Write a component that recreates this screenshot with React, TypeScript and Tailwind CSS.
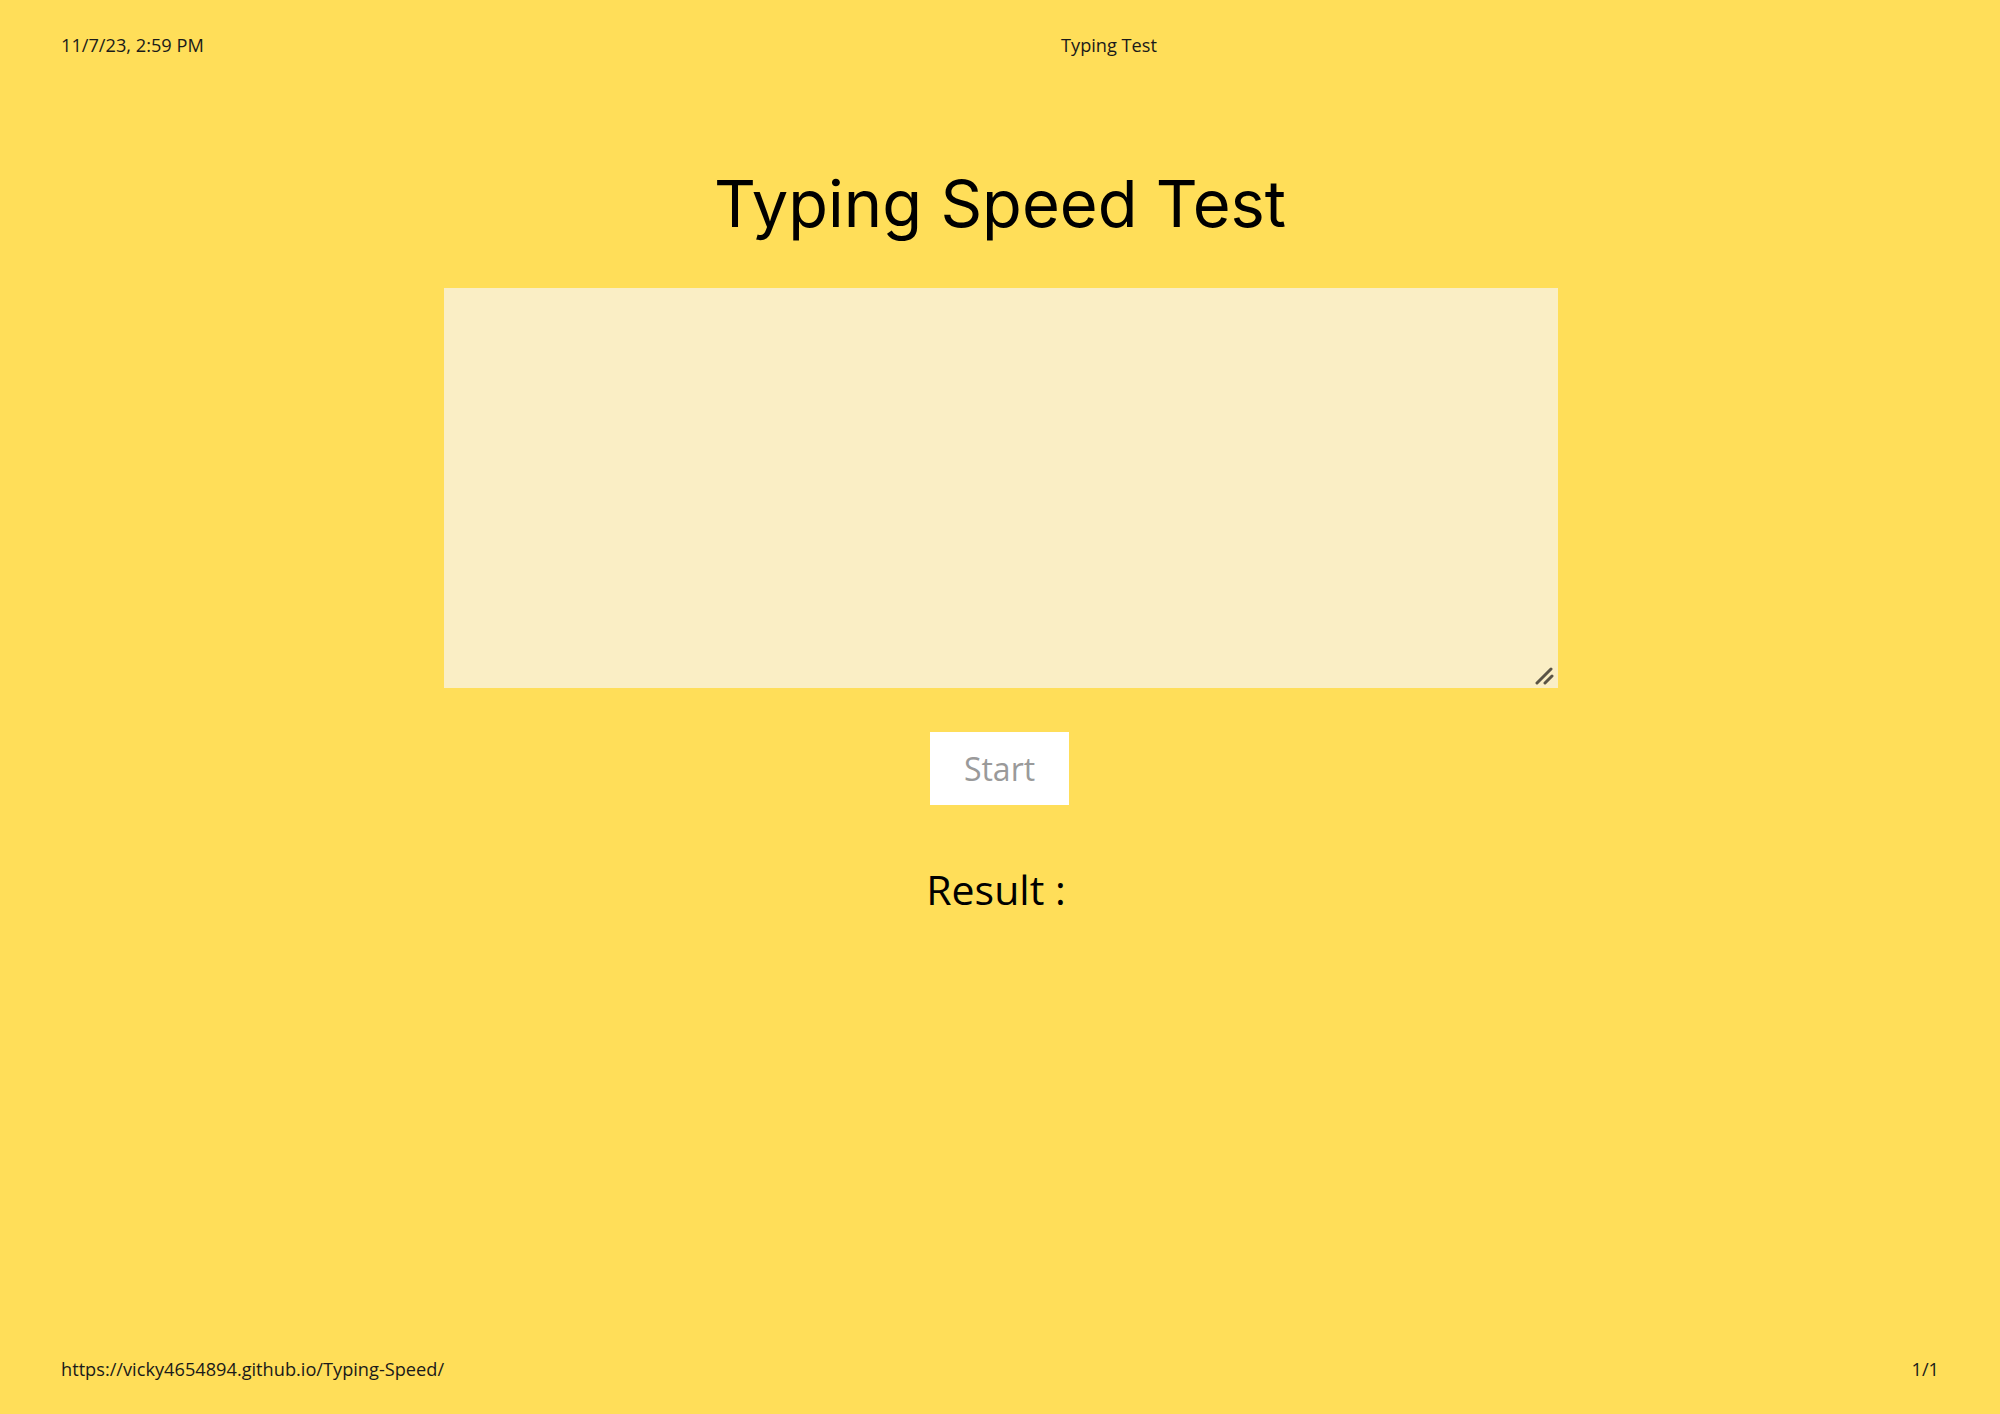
import React from "react";

export default function App() {
  return (
    <div
      className="flex h-[1414px] w-[2000px] flex-col bg-[#ffde59] text-black"
      style={{ fontFamily: "'Open Sans', sans-serif" }}
    >
      {/* Print header */}
      <div className="flex px-[61px] pt-[33px] text-[18.2px] leading-[25px] text-[#1a1a1a]">
        <span className="w-[1000px]">11/7/23, 2:59 PM</span>
        <span>Typing Test</span>
      </div>

      {/* Page content */}
      <div className="flex flex-1 flex-col items-center pt-[104px]">
        <h1
          className="text-[65px] leading-[84px] font-normal"
          style={{ fontFamily: "'Inter', 'Lato', sans-serif" }}
        >
          Typing Speed Test
        </h1>
        <div className="relative mt-[42px] ml-[2px] h-[400px] w-[1114px]">
          <textarea className="block h-full w-full resize-none bg-[#faeec5] outline-none" />
          {/* resize grip */}
          <svg
            className="pointer-events-none absolute right-[3px] bottom-[3px]"
            width="20"
            height="20"
            viewBox="0 0 20 20"
          >
            <path d="M2 18L16 4" stroke="#5a5446" strokeWidth="3" strokeLinecap="round" />
            <path d="M10 18L17 11" stroke="#5a5446" strokeWidth="3" strokeLinecap="round" />
          </svg>
        </div>
        <button className="mt-[44px] ml-[-1px] h-[73px] w-[139px] bg-white text-[32px] text-[#9a9a9a]">
          Start
        </button>
        <div className="mt-[55px] mr-[8px] text-[41px] leading-[58px]">Result :</div>
      </div>

      {/* Print footer */}
      <div className="flex justify-between px-[61px] pb-[32px] text-[18.2px] leading-[25px] text-[#1a1a1a]">
        <span>https://vicky4654894.github.io/Typing-Speed/</span>
        <span>1/1</span>
      </div>
    </div>
  );
}
